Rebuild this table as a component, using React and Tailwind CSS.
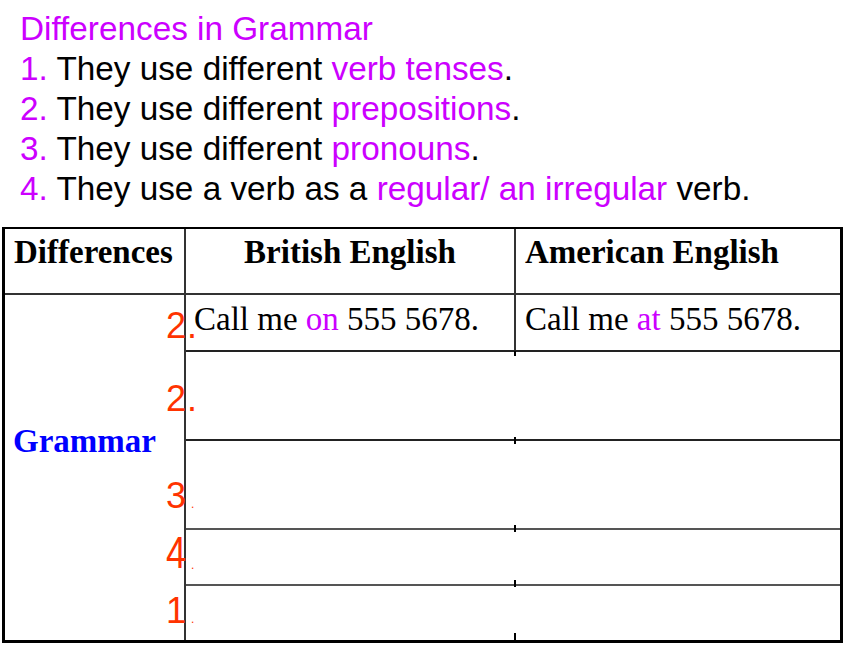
import React from "react";

const M = "text-[#cc00ff]";

function Line({ children }) {
  return <div className="h-[40px] leading-[40px] whitespace-nowrap">{children}</div>;
}

function Num({ n, top, small, tall }) {
  return (
    <div
      className="absolute left-[166px] text-[36px] leading-[36px] text-[#ff3300] whitespace-nowrap"
      style={{ top, fontFamily: '"Liberation Sans", Arial, sans-serif' }}
    >
      <span className={tall ? "inline-block origin-bottom scale-y-[1.23]" : "inline-block"}>{n}</span>
      <span className={small ? "text-[12px] ml-[5px]" : "ml-[1px]"}>.</span>
    </div>
  );
}

export default function App() {
  const serif = { fontFamily: '"Liberation Serif", "Times New Roman", serif' };
  return (
    <div
      className="relative w-[860px] h-[645px] bg-white overflow-hidden text-black"
      style={{ fontFamily: '"Liberation Sans", Arial, sans-serif' }}
    >
      <div className="pt-[9px] pl-[20px] text-[33.3px]">
        <Line><span className={M}>Differences in Grammar</span></Line>
        <Line><span className={M}>1. </span>They use different <span className={M}>verb tenses</span>.</Line>
        <Line><span className={M}>2. </span>They use different <span className={M}>prepositions</span>.</Line>
        <Line><span className={M}>3. </span>They use different <span className={M}>pronouns</span>.</Line>
        <Line><span className={M}>4. </span>They use a verb as a <span className={M}>regular/ an irregular</span> verb.</Line>
      </div>

      <div
        className="mt-[18px] ml-[2px] w-[841px] border-l-[3px] border-r-[3px] border-t-2 border-b-[3px] border-black text-[33px]"
        style={serif}
      >
        {/* header */}
        <div className="flex h-[66px] border-b-2 border-[#333] font-bold leading-[40px]">
          <div className="w-[181px] border-r-2 border-[#333] pl-[9px] pt-[3px]">Differences</div>
          <div className="w-[330px] border-r-2 border-[#333] pt-[3px] text-center">British English</div>
          <div className="flex-1 pl-[9px] pt-[3px]">American English</div>
        </div>
        {/* body */}
        <div className="flex h-[345px]">
          <div className="w-[181px] border-r-2 border-[#333] pl-[8px] pt-[130px] font-bold text-[#0000ff] leading-[32px]">
            Grammar
          </div>
          <div className="relative flex-1 flex flex-col">
            <div className="flex h-[57px] border-b-2 border-[#222] leading-[40px]">
              <div className="w-[330px] border-r-2 border-[#333] pl-[8px] pt-[4px] whitespace-nowrap">
                Call me <span className={M}>on</span> 555 5678.
              </div>
              <div className="flex-1 pl-[9px] pt-[4px] whitespace-nowrap">
                Call me <span className={M}>at</span> 555 5678.
              </div>
            </div>
            <div className="h-[89px] border-b-2 border-[#222]" />
            <div className="h-[89px] border-b-2 border-[#555]" />
            <div className="h-[56px] border-b-2 border-[#555]" />
            <div className="flex-1" />
            <div className="absolute left-[328px] top-[56px] h-[5px] w-[1.5px] bg-black" />
            <div className="absolute left-[328px] top-[142px] h-[7px] w-[1.5px] bg-black" />
            <div className="absolute left-[328px] top-[230px] h-[7px] w-[1.5px] bg-black" />
            <div className="absolute left-[328px] top-[285px] h-[7px] w-[1.5px] bg-black" />
            <div className="absolute left-[328px] top-[338px] h-[7px] w-[1.5px] bg-black" />
          </div>
        </div>
      </div>

      <Num n="2" top={308} />
      <Num n="2" top={381} />
      <Num n="3" top={478} small />
      <Num n="4" top={539} small tall />
      <Num n="1" top={593} small />
    </div>
  );
}
